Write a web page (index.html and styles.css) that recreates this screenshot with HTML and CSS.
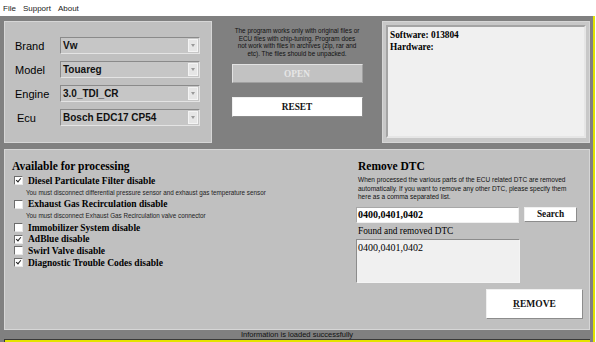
FILE: index.html
```html
<!DOCTYPE html>
<html>
<head>
    <meta charset="utf-8">
    <title>DPF EGR Remover</title>
    <link rel="stylesheet" href="styles.css">
</head>
<body>
    <div class="menubar">
        <span>File</span>
        <span>Support</span>
        <span>About</span>
    </div>
    <div class="app">
        <div class="top">
            <div class="panel car">
                <div class="field">
                    <label>Brand</label>
                    <div class="combo"><span>Vw</span><i class="drop"></i></div>
                </div>
                <div class="field">
                    <label>Model</label>
                    <div class="combo"><span>Touareg</span><i class="drop"></i></div>
                </div>
                <div class="field">
                    <label>Engine</label>
                    <div class="combo"><span>3.0_TDI_CR</span><i class="drop"></i></div>
                </div>
                <div class="field">
                    <label class="ecu">Ecu</label>
                    <div class="combo"><span>Bosch EDC17 CP54</span><i class="drop"></i></div>
                </div>
            </div>
            <div class="actions">
                <p class="hint">The program works only with original files or ECU files with chip-tuning. Program does not work with files in archives (zip, rar and etc). The files should be unpacked.</p>
                <div class="btn disabled">OPEN</div>
                <div class="btn">RESET</div>
            </div>
            <div class="panel info">
                <div class="infobox">
                    <b>Software: 013804</b>
                    <b>Hardware:</b>
                </div>
            </div>
        </div>

        <div class="panel processing">
            <div class="options">
                <h3>Available for processing</h3>
                <div class="opt"><span class="box checked"></span>Diesel Particulate Filter disable</div>
                <div class="note">You must disconnect differential pressure sensor and exhaust gas temperature sensor</div>
                <div class="opt"><span class="box"></span>Exhaust Gas Recirculation disable</div>
                <div class="note">You must disconnect Exhaust Gas Recirculation valve connector</div>
                <div class="opt"><span class="box"></span>Immobilizer System disable</div>
                <div class="opt"><span class="box checked"></span>AdBlue disable</div>
                <div class="opt"><span class="box"></span>Swirl Valve disable</div>
                <div class="opt"><span class="box checked"></span>Diagnostic Trouble Codes disable</div>
            </div>
            <div class="dtc">
                <h3>Remove DTC</h3>
                <p class="desc">When processed the various parts of the ECU related DTC are removed automatically. If you want to remove any other DTC, please specify them here as a comma separated list.</p>
                <div class="search-row">
                    <div class="input">0400,0401,0402</div>
                    <div class="btn small">Search</div>
                </div>
                <div class="found-label">Found and removed DTC</div>
                <div class="found">0400,0401,0402</div>
                <div class="remove-row">
                    <div class="btn big"><u>R</u>EMOVE</div>
                </div>
            </div>
        </div>

        <div class="status">Information is loaded successfully</div>
        <div class="progress"></div>
    </div>
</body>
</html>
```

FILE: styles.css
```css
* {
  box-sizing: border-box;
}
body {
  margin: 0;
  width: 596px;
  height: 342px;
  overflow: hidden;
  background: #fff;
  font-family: "Liberation Sans", Arial, sans-serif;
  color: #000;
}
.menubar {
  height: 16px;
  padding: 4px 0 0 3px;
  font-size: 8px;
  color: #222;
  display: flex;
  gap: 7px;
}
.app {
  background: #808080;
  height: 326px;
  width: 595px;
  border-right: 2px solid #e2e200;
  padding: 5px 3px 0 4px;
}
.top {
  display: flex;
  height: 122px;
}
.panel {
  background: #c0c0c0;
  border: 1px solid #d6d6d6;
}
/* car selection */
.car {
  width: 208px;
  padding: 15px 0 0 10px;
}
.field {
  display: flex;
  align-items: center;
  height: 17px;
  margin-bottom: 7px;
}
.field label {
  width: 45px;
  font-size: 11px;
}
.field label.ecu {
  padding-left: 2px;
}
.combo {
  width: 140px;
  height: 17px;
  display: flex;
  align-items: center;
  background: #c6c6c6;
  border: 1px solid;
  border-color: #8a8a8a #e4e4e4 #e4e4e4 #8a8a8a;
  font-size: 10px;
  font-weight: bold;
  color: #111;
}
.combo span {
  flex: 1;
  padding-left: 2px;
}
.drop {
  width: 10px;
  height: 13px;
  margin-right: 1px;
  background: #e6e6e6;
  border: 1px solid #f4f4f4;
  position: relative;
}
.drop::after {
  content: "";
  position: absolute;
  left: 2px;
  top: 4px;
  border-left: 2px solid transparent;
  border-right: 2px solid transparent;
  border-top: 3px solid #999;
}
/* middle column */
.actions {
  width: 170px;
  display: flex;
  flex-direction: column;
  align-items: center;
  padding-top: 6px;
}
.hint {
  margin: 0;
  width: 127px;
  font-size: 6.4px;
  line-height: 7.7px;
  text-align: center;
  color: #111;
}
.btn {
  background: #fff;
  border: 1px solid;
  border-color: #f0f0f0 #8c8c8c #8c8c8c #f0f0f0;
  font-family: "Liberation Serif", "Times New Roman", serif;
  font-weight: bold;
  text-align: center;
  color: #111;
}
.actions .btn {
  width: 131px;
  height: 20px;
  line-height: 18px;
  font-size: 9.3px;
  margin-top: 14px;
}
.actions .btn.disabled {
  margin-top: 6px;
  height: 19px;
  background: #c2c2c2;
  color: #e6e6e6;
  border-color: #e2e2e2 #a0a0a0 #a0a0a0 #e2e2e2;
}
/* ecu info */
.info {
  width: 208px;
  background: #c8c8c8;
  padding: 3px 3px 4px 3px;
}
.infobox {
  height: 100%;
  background: #f0f0f0;
  border: 2px solid;
  border-color: #a4a4a4 #e6e6e6 #e6e6e6 #a4a4a4;
  padding: 2px 2px;
  font-family: "Liberation Serif", "Times New Roman", serif;
  font-size: 9.3px;
  line-height: 12px;
  display: flex;
  flex-direction: column;
}
/* processing panel */
.processing {
  margin-top: 6px;
  height: 181px;
  width: 586px;
  display: flex;
  padding: 8px 6px 0 7px;
}
.options {
  flex: 1;
}
.options h3 {
  margin-bottom: 1px;
}
h3 {
  margin: 0;
  font-family: "Liberation Serif", "Times New Roman", serif;
  font-size: 11.5px;
  line-height: 16px;
}
.opt {
  display: flex;
  align-items: center;
  height: 11.7px;
  font-family: "Liberation Serif", "Times New Roman", serif;
  font-size: 9.5px;
  font-weight: bold;
}
.box {
  width: 9px;
  height: 9px;
  margin: 0 5px 0 2px;
  background: #fff;
  border: 1px solid;
  border-color: #6c6c6c #e8e8e8 #e8e8e8 #6c6c6c;
  position: relative;
}
.box.checked::after {
  content: "";
  position: absolute;
  left: 2px;
  top: 0px;
  width: 2px;
  height: 4px;
  border: solid #222;
  border-width: 0 1.5px 1.5px 0;
  transform: rotate(40deg);
}
.note {
  font-size: 6.3px;
  height: 11.7px;
  line-height: 11.7px;
  padding-left: 14px;
  color: #222;
}
.dtc {
  width: 227px;
  display: flex;
  flex-direction: column;
}
.dtc h3 {
  padding-left: 2px;
  margin-bottom: 2px;
}
.desc {
  margin: 0 0 5px 2px;
  width: 212px;
  font-size: 6.5px;
  line-height: 8.5px;
  color: #111;
}
.search-row {
  display: flex;
  align-items: center;
  gap: 5px;
}
.input {
  width: 163px;
  height: 16px;
  background: #fff;
  border: 1px solid;
  border-color: #a8a8a8 #f0f0f0 #f0f0f0 #a8a8a8;
  font-family: "Liberation Serif", "Times New Roman", serif;
  font-size: 10px;
  font-weight: bold;
  line-height: 14px;
  padding-left: 1px;
}
.btn.small {
  width: 53px;
  height: 15px;
  font-size: 9.3px;
  line-height: 13px;
}
.found-label {
  font-family: "Liberation Serif", "Times New Roman", serif;
  font-size: 9.3px;
  margin: 3px 0 2px 2px;
  line-height: 11px;
}
.found {
  width: 164px;
  height: 44px;
  background: #f0f0f0;
  border: 1px solid;
  border-color: #8c8c8c #f4f4f4 #f4f4f4 #8c8c8c;
  font-family: "Liberation Serif", "Times New Roman", serif;
  font-size: 10px;
  padding: 2px 1px;
}
.remove-row {
  display: flex;
  justify-content: flex-end;
  margin-top: 6px;
}
.btn.big {
  width: 97px;
  height: 30px;
  font-size: 9.5px;
  line-height: 28px;
}
.btn.big u {
  text-decoration-color: #888;
}
/* status line */
.status {
  height: 9px;
  font-size: 7.5px;
  line-height: 10px;
  text-align: center;
  color: #111;
}
.progress {
  width: 586px;
  height: 10px;
  background: #e4e400;
  border-top: 1px solid #3a3a3a;
  border-left: 1px solid #3a3a3a;
}
```
